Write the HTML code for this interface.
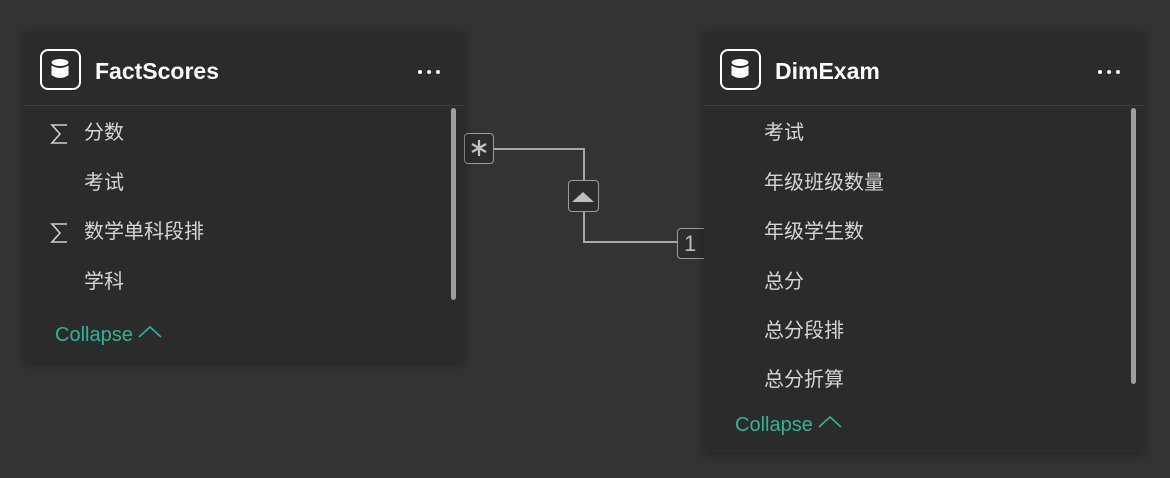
<!DOCTYPE html>
<html><head><meta charset="utf-8"><style>
body{margin:0;width:1170px;height:478px;background:#333333;position:relative;overflow:hidden;font-family:"Liberation Sans","Noto Sans CJK SC",sans-serif;}
.card{position:absolute;background:#2b2b2b;box-shadow:0 2px 10px rgba(0,0,0,.35);border-radius:2px;}
.hdr{position:absolute;left:0;right:0;top:0;height:73px;border-bottom:1px solid #3d3d3d;}
.ico{position:absolute;left:16px;top:17px;width:41px;height:41px;border:2.5px solid #fff;border-radius:8px;box-sizing:border-box;}
.title{position:absolute;left:71px;top:26px;color:#fff;font-size:23px;font-weight:bold;}
.dots{position:absolute;right:24px;top:38px;}
.dots i{display:inline-block;width:4px;height:4px;background:#fff;border-radius:50%;margin-left:5px;vertical-align:top;}
.row{position:absolute;left:60px;color:#d6d6d6;font-size:20px;line-height:24px;}
.sig{position:absolute;left:25px;}
.col{position:absolute;left:31px;color:#2bb59a;font-size:20px;line-height:24px;}
.sb{position:absolute;width:5px;background:#9e9e9e;border-radius:3px;}
.box{position:absolute;border:1.5px solid #9b9b9b;border-radius:4px;background:#2d2d2d;box-sizing:border-box;color:#bbb;text-align:center;}
</style></head><body>
<svg style="position:absolute;left:0;top:0" width="1170" height="478">
<path d="M493 149 H584 V181 M584 211 V242 H678" stroke="#a8a8a8" stroke-width="2" fill="none"/>
</svg>
<div class="box" style="left:464px;top:133px;width:30px;height:31px;"><svg width="28" height="28" style="position:absolute;left:0;top:0"><path d="M14 6 V22 M7 10 L21 18 M21 10 L7 18" stroke="#c4c4c4" stroke-width="2.2"/></svg></div>
<div class="box" style="left:568px;top:180px;width:31px;height:32px;"><svg width="28" height="28" style="position:absolute;left:0;top:0"><path d="M3 21 L14 11 L25 21 Z" fill="#bdbdbd"/></svg></div>
<div class="box" style="left:677px;top:228px;width:34px;height:31px;font-size:22px;line-height:29px;text-align:left;padding-left:6px;">1</div>

<div class="card" style="left:24px;top:32px;width:440px;height:330px;">
<div class="hdr"><div class="ico"><svg width="36" height="36" style="position:absolute;left:0;top:0"><ellipse cx="18" cy="11.5" rx="8.5" ry="3.5" fill="#fff"/><path d="M9.5 14.5 V24 Q18 30 26.5 24 V14.5 Q18 19.5 9.5 14.5Z" fill="#fff"/></svg></div>
<div class="title">FactScores</div><div class="dots"><i></i><i></i><i></i></div></div>
<svg class="sig" style="top:91px" width="22" height="22"><path d="M18 2 H3 L11 11 L3 20 H18" stroke="#cfcfcf" stroke-width="1.6" fill="none"/></svg><div class="row" style="top:89px">分数</div>
<div class="row" style="top:139px">考试</div>
<svg class="sig" style="top:190px" width="22" height="22"><path d="M18 2 H3 L11 11 L3 20 H18" stroke="#cfcfcf" stroke-width="1.6" fill="none"/></svg><div class="row" style="top:188px">数学单科段排</div>
<div class="row" style="top:238px">学科</div>
<div class="col" style="top:291px">Collapse <svg width="24" height="16" style="vertical-align:1px"><path d="M1 13 L12 3 L23 13" stroke="#2bb59a" stroke-width="1.6" fill="none"/></svg></div>
<div class="sb" style="left:427px;top:76px;height:192px"></div>
</div>

<div class="card" style="left:704px;top:32px;width:440px;height:420px;">
<div class="hdr"><div class="ico"><svg width="36" height="36" style="position:absolute;left:0;top:0"><ellipse cx="18" cy="11.5" rx="8.5" ry="3.5" fill="#fff"/><path d="M9.5 14.5 V24 Q18 30 26.5 24 V14.5 Q18 19.5 9.5 14.5Z" fill="#fff"/></svg></div>
<div class="title">DimExam</div><div class="dots"><i></i><i></i><i></i></div></div>
<div class="row" style="top:89px">考试</div>
<div class="row" style="top:139px">年级班级数量</div>
<div class="row" style="top:188px">年级学生数</div>
<div class="row" style="top:238px">总分</div>
<div class="row" style="top:287px">总分段排</div>
<div class="row" style="top:336px">总分折算</div>
<div class="col" style="top:381px">Collapse <svg width="24" height="16" style="vertical-align:1px"><path d="M1 13 L12 3 L23 13" stroke="#2bb59a" stroke-width="1.6" fill="none"/></svg></div>
<div class="sb" style="left:427px;top:76px;height:276px"></div>
</div>
</body></html>
